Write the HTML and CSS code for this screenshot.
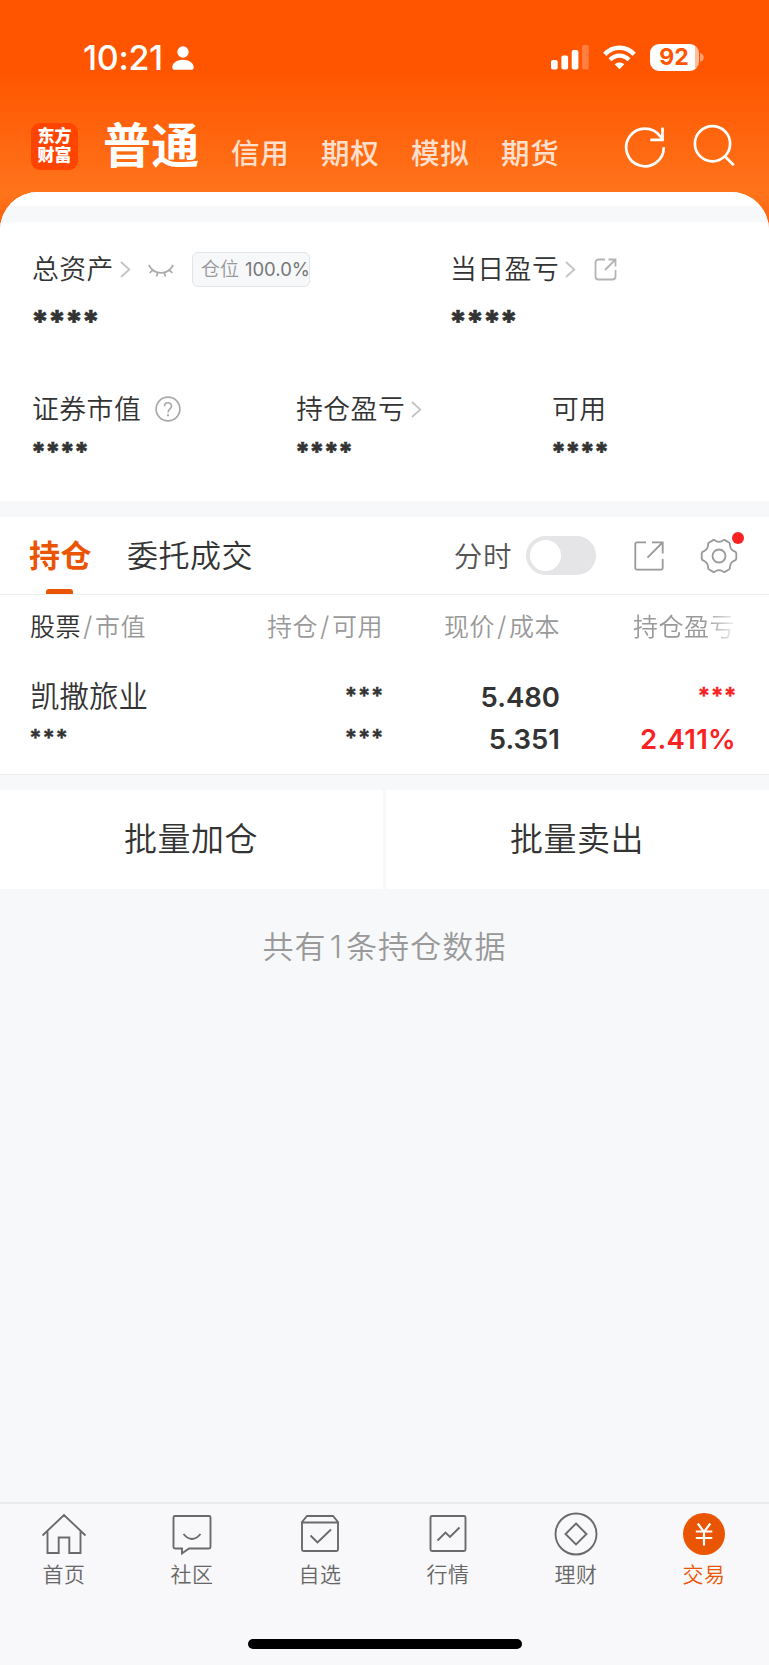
FILE: index.html
```html
<!DOCTYPE html>
<html lang="zh-CN">
<head>
<meta charset="utf-8">
<title>交易</title>
<link rel="stylesheet" href="styles.css">
</head>
<body>
<div class="app">
  <header class="hero">
    <div class="status">
      <span class="time">10:21</span>
      <svg class="person" width="22" height="24" viewBox="0 0 22 24" fill="#fff"><circle cx="11" cy="6" r="5.7"/><path d="M0.3 21.2C0.3 17 5 13.7 11 13.7s10.7 3.300 10.7 7.500c0 1.600-.9 2.600-2.500 2.600H2.800c-1.600 0-2.500-1-2.500-2.600Z"/></svg>
      <svg class="signal" width="38" height="25" viewBox="0 0 38 25" fill="#fff"><rect x="0" y="15" width="6.700" height="9.500" rx="2"/><rect x="10.400" y="10.500" width="6.700" height="14" rx="2"/><rect x="20.700" y="5" width="6.700" height="19.500" rx="2"/><rect x="31" y="0" width="6.700" height="24.500" rx="2" opacity=".25"/></svg>
      <svg class="wifi" width="33" height="25" viewBox="0 0 33 25" fill="none" stroke="#fff"><path d="M1.800 9.400C10 .6 23 .6 31.200 9.400" stroke-width="4.600"/><path d="M7 14.800C12.500 9.300 20.500 9.300 26 14.800" stroke-width="4.200"/><path d="M16.500 24.200 11.700 19.300C14.500 17 18.500 17 21.300 19.300Z" fill="#fff" stroke="none"/></svg>
      <span class="battery"><span class="level">92</span></span>
      <svg class="nub" width="4" height="9" viewBox="0 0 4 9"><path d="M0 0C5 1.500 5 7.500 0 9Z" fill="#fff" opacity=".45"/></svg>
    </div>
    <nav class="accounts">
      <div class="logo"><span>东方</span><span>财富</span></div>
      <b class="current">普通</b>
      <span class="acct">信用</span><span class="acct">期权</span><span class="acct">模拟</span><span class="acct">期货</span>
      <svg class="refresh" width="44" height="44" viewBox="0 0 44 44" fill="none" stroke="#fff" stroke-width="2.700"><path d="M40.800 22.300A18.800 18.800 0 1 1 37.300 11.500L39.500 14.300"/><path d="M39.500 2.500V14.800H27.300"/></svg>
      <svg class="search" width="44" height="44" viewBox="0 0 44 44" fill="none" stroke="#fff" stroke-width="2.700"><circle cx="20.500" cy="19.700" r="17.600"/><path d="M32.800 32.300 41.800 41.200"/></svg>
    </nav>
  </header>

  <main class="panel">
    <div class="band lead"></div>
    <section class="overview">
      <div class="totals">
        <div class="total">
          <div class="label">总资产<svg class="chev" width="11" height="17" viewBox="0 0 11 17"><path d="M1 1 9.300 8.500 1 16"/></svg><svg class="eye" width="26" height="14" viewBox="0 0 26 14" fill="none" stroke="#aaa" stroke-width="1.700"><path d="M.7 1C6.500 11.500 19.500 11.500 25.300 1M5 5.700 1.700 9M9.800 8.400 8.600 12.600M16.200 8.400 17.400 12.600M21 5.700 24.300 9"/></svg><span class="badge">仓位<i>100.0%</i></span></div>
          <div class="mask big">****</div>
        </div>
        <div class="total">
          <div class="label">当日盈亏<svg class="chev" width="11" height="17" viewBox="0 0 11 17"><path d="M1 1 9.300 8.500 1 16"/></svg><svg class="share" width="23" height="23" viewBox="0 0 23 23" fill="none" stroke="#b4b4b4" stroke-width="1.800"><path d="M11 1.500H4.500a3 3 0 0 0-3 3v14a3 3 0 0 0 3 3h14a3 3 0 0 0 3-3V12M14.500 1.500h7v7M21 2 11 12"/></svg></div>
          <div class="mask big">****</div>
        </div>
      </div>
      <div class="details">
        <div class="detail">
          <div class="label">证券市值<svg class="help" width="26" height="26" viewBox="0 0 26 26" fill="none" stroke="#aaa" stroke-width="1.700"><circle cx="13" cy="13" r="11.900"/><path d="M9.500 10.300C9.500 5.600 16.500 5.600 16.500 10.200 16.500 12.800 13 13 13 16.500"/><path d="M13 18.300V20.300" stroke-width="2"/></svg></div>
          <div class="mask">****</div>
        </div>
        <div class="detail">
          <div class="label">持仓盈亏<svg class="chev" width="11" height="17" viewBox="0 0 11 17"><path d="M1 1 9.300 8.500 1 16"/></svg></div>
          <div class="mask">****</div>
        </div>
        <div class="detail">
          <div class="label">可用</div>
          <div class="mask">****</div>
        </div>
      </div>
    </section>
    <div class="band"></div>
    <section class="toolbar">
      <b class="tab on">持仓</b>
      <span class="tab">委托成交</span>
      <span class="minute">分时</span>
      <span class="toggle"></span>
      <svg class="export" width="30" height="30" viewBox="0 0 30 30" fill="none" stroke="#999" stroke-width="1.800"><path d="M12 1.300H3a1.700 1.700 0 0 0-1.700 1.700V27a1.700 1.700 0 0 0 1.700 1.700H27a1.700 1.700 0 0 0 1.700-1.700V18M18 1.300H28.700V12.500M28.500 1.500 13.500 16.700"/></svg>
      <span class="settings"><svg width="38" height="36" viewBox="0 0 38 36" fill="none" stroke="#999" stroke-width="1.800" stroke-linejoin="round"><circle cx="19" cy="18" r="6.500"/><path d="M13.600 1.900Q15 2 15.800 3Q19 4.600 22.200 3Q23 2 24.400 1.900L29.300 4.700Q30.200 5.700 29.900 7Q30.200 11.300 34 13.200Q36 13.800 36.300 15.300V20.700Q36 22.200 34 22.800Q30.200 24.700 29.900 29Q30.200 30.300 29.300 31.300L24.400 34.100Q23 34 22.200 33Q19 31.400 15.800 33Q15 34 13.600 34.100L8.700 31.300Q7.800 30.300 8.100 29Q7.800 24.700 4 22.800Q2 22.200 1.700 20.700V15.300Q2 13.800 4 13.200Q7.800 11.300 8.100 7Q7.800 5.700 8.700 4.700Z"/></svg></span>
    </section>
    <section class="holdings">
      <div class="row head"><span><em>股票</em><s>/</s>市值</span><span>持仓<s>/</s>可用</span><span>现价<s>/</s>成本</span><span class="fade">持仓盈亏</span></div>
      <div class="row first"><span class="name">凯撒旅业</span><span class="stars">***</span><span class="num">5.480</span><span class="stars up">***</span></div>
      <div class="row second"><span class="stars">***</span><span class="stars">***</span><span class="num">5.351</span><span class="num up">2.411%</span></div>
    </section>
    <div class="band short"></div>
    <section class="bulk"><div>批量加仓</div><div>批量卖出</div></section>
    <p class="count">共有<i>1</i>条持仓数据</p>
  </main>

  <footer class="dock">
    <nav class="tabs">
      <a><svg width="46" height="44" viewBox="0 0 46 44"><path d="M1.500 23.500 23 3 44.500 23.500M6.500 19.500V41H17.700V25.500H28.300V41H39.500V19.500"/></svg>首页</a>
      <a><svg width="46" height="44" viewBox="0 0 46 44"><path d="M6 4H40a1.500 1.500 0 0 1 1.500 1.500V35a1.500 1.500 0 0 1-1.500 1.500H20L13 41.500V36.500H6a1.500 1.500 0 0 1-1.500-1.500V5.500A1.500 1.500 0 0 1 6 4ZM14.500 22Q23 32 31.500 22"/></svg>社区</a>
      <a><svg width="46" height="44" viewBox="0 0 46 44"><path d="M10 4H36L41 10V37.500a1.500 1.500 0 0 1-1.500 1.500H6.500A1.500 1.500 0 0 1 5 37.500V10ZM5 10.500H41M13.500 23.500 20.500 30.500 34 17.500"/></svg>自选</a>
      <a><svg width="46" height="44" viewBox="0 0 46 44"><rect x="5.500" y="4" width="35" height="35" rx="1.500"/><path d="M12.500 28.500 20.500 20.500 25 25 34.500 15.500"/></svg>行情</a>
      <a><svg width="46" height="44" viewBox="0 0 46 44"><circle cx="23" cy="22" r="20.500"/><path d="M23 11.500 33.500 22 23 32.500 12.500 22Z"/></svg>理财</a>
      <a class="active"><svg width="46" height="44" viewBox="0 0 46 44"><circle class="disc" cx="23" cy="22" r="21"/><path class="yen" d="M16.800 11.500 23 20 29.300 11.500M23 20V33.500M14.800 19.500H31.300M14.800 26H31.300"/></svg>交易</a>
    </nav>
    <div class="home"></div>
  </footer>
</div>
</body>
</html>
```

FILE: styles.css
```css
* { box-sizing: border-box; }
body { margin: 0; }
i, em, s { font-style: normal; text-decoration: none; }
svg { display: block; flex: none; }

.app {
  width: 769px;
  height: 1665px;
  display: flex;
  flex-direction: column;
  overflow: hidden;
  background: linear-gradient(#ff5500 70px, #ff741b 195px, #ff5a08 232px);
  font-family: Inter, "Noto Sans CJK SC", sans-serif;
  font-weight: 350;
  color: #333;
  white-space: nowrap;
}

/* Header */
.hero { height: 192px; flex: none; color: #fff; }
.status { height: 90px; padding: 25px 65px 0 83px; display: flex; align-items: center; }
.time { font-size: 34px; font-weight: 500; line-height: 40px; width: 82px; letter-spacing: -.3px; }
.person { margin: 0 auto 0 7px; }
.signal { margin-right: 14px; }
.wifi { margin-right: 14px; }
.battery { width: 49px; height: 27px; border-radius: 9px; overflow: hidden; background: linear-gradient(90deg, #fff 45px, #ffbf9c 45px); }
.level { display: block; width: 48px; color: #ff5500; font-size: 23px; font-weight: 700; line-height: 27px; text-align: center; }
.nub { margin-left: 1px; }
.accounts { height: 102px; padding: 0 31px; display: flex; align-items: flex-start; }
.logo { width: 47px; height: 47px; margin-top: 33px; border-radius: 9px; background: #ff4400; font-size: 17px; font-weight: 900; line-height: 19px; padding-top: 4px; text-align: center; }
.logo span { display: block; }
.current { width: 128px; padding-left: 25px; margin-top: 21px; font-size: 48px; line-height: 70px; font-weight: 700; letter-spacing: .3px; }
.acct { width: 90px; margin-top: 44px; padding-left: 25px; font-size: 28.500px; line-height: 40px; font-weight: 500; letter-spacing: .8px; color: #ffe0cf; }
.refresh { margin: 35px 0 0 57px; }
.search { margin: 34px 0 0 25px; }

/* Panel */
.panel { flex: 1; background: #f7f8fa; border-radius: 38px 38px 0 0; overflow: hidden; }
.band { height: 16px; background: #f7f8fa; }
.band.lead { height: 30px; border-top: 14px solid #fff; }
.band.short { height: 15px; }
.overview { height: 279px; background: #fff; padding: 27px 32px 0; }
.totals { display: flex; height: 140px; }
.total:first-child { width: 418px; }
.label { height: 40px; display: flex; align-items: center; font-size: 26.800px; letter-spacing: .5px; line-height: 40px; }
.chev { margin-left: 6px; fill: none; stroke: #c4c4c4; stroke-width: 1.800; }
.eye { margin: 3px 0 0 17px; }
.badge { width: 118px; height: 35px; margin-left: 18px; padding-left: 8px; border: 1px solid #e3e4e8; border-radius: 6px; background: #f7f8fa; font-size: 19px; line-height: 33px; letter-spacing: 0; color: #999; }
.badge i { margin-left: 6px; font-size: 18.500px; font-weight: 400; color: #777; }
.share { margin-left: 18px; }
.help { margin-left: 14px; }
.mask { height: 36px; line-height: 45px; font-size: 26px; font-weight: 800; letter-spacing: -.8px; text-indent: -1px; -webkit-text-stroke: .5px currentColor; }
.mask.big { height: 50px; line-height: 66px; font-size: 31px; letter-spacing: -1.100px; text-indent: -1px; }
.details { display: flex; }
.detail { width: 264px; flex: none; }
.detail:nth-child(2) { width: 256px; }

/* Toolbar */
.toolbar { height: 78px; background: #fff; border-bottom: 1px solid #eeeff1; padding: 0 31px 0 29px; display: flex; align-items: center; }
.tab { position: relative; font-size: 31px; letter-spacing: .5px; line-height: 77px; }
.tab.on { width: 98px; font-weight: 700; color: #ea5504; }
.tab.on::after { content: ""; position: absolute; left: 17px; bottom: 0; width: 27px; height: 5px; border-radius: 3px 3px 0 0; background: #ea5504; }
.minute { margin: 0 0 2px auto; font-size: 28.500px; letter-spacing: .6px; color: #555; }
.toggle { width: 70px; height: 39px; margin: 0 38px 0 14px; padding: 4px; border-radius: 20px; background: #e5e5e7; }
.toggle::after { content: ""; display: block; width: 31px; height: 31px; border-radius: 50%; background: #fff; }
.settings { position: relative; margin-left: 36px; }
.settings::after { content: ""; position: absolute; left: 32px; top: -6px; width: 12px; height: 12px; border-radius: 50%; background: #fa2222; }

/* Holdings */
.holdings { height: 180px; background: #fff; border-bottom: 1px solid #ececee; padding: 12px 33px 0 30px; }
.row { display: grid; grid-template-columns: 180px 173px 177px 176px; }
.row > * { text-align: right; }
.row > :first-child { text-align: left; }
.head { height: 41px; line-height: 40px; font-size: 25px; letter-spacing: .5px; color: #999; }
.head em { color: #333; }
.head s { margin: 0 2px; font-size: 27px; }
.head .fade { text-align: left; padding-left: 73px; -webkit-mask-image: linear-gradient(90deg, #000 145px, transparent 180px); mask-image: linear-gradient(90deg, #000 145px, transparent 180px); }
.first, .second { height: 42px; line-height: 42px; }
.first { margin-top: 28px; }
.name { font-size: 29.500px; letter-spacing: 0; margin-top: -1px; }
.num { font-size: 27.500px; font-weight: 600; }
.num.up { letter-spacing: .3px; }
.stars { font-size: 23px; font-weight: 700; letter-spacing: .3px; line-height: 40px; margin: 0 -1px 0 -1px; -webkit-text-stroke: .3px currentColor; }
.up { color: #fa2222; }

.bulk { display: grid; grid-template-columns: 1fr 1fr; gap: 3px; height: 98px; }
.bulk div { background: #fff; text-align: center; font-size: 33px; letter-spacing: .5px; line-height: 99px; padding-right: 1px; }
.count { margin: 39px 0 0; text-align: center; font-size: 31px; letter-spacing: 1.100px; line-height: 40px; color: #999; }
.count i { margin: 0 3px; }

/* Dock */
.dock { height: 163px; flex: none; background: #f8f8fa; border-top: 2px solid #e9eaed; }
.tabs { display: grid; grid-template-columns: repeat(6, 128px); padding-top: 8px; height: 135px; }
.tabs a { display: flex; flex-direction: column; align-items: center; font-size: 21px; letter-spacing: .5px; line-height: 34px; color: #666; }
.tabs svg { margin-bottom: 2px; fill: none; stroke: #6a6a6a; stroke-width: 1.900; }
.tabs .active { color: #ea5504; }
.tabs .disc { fill: #ea5504; stroke: none; }
.tabs .yen { stroke: #fff; stroke-width: 2.200; }
.home { width: 274px; height: 10px; margin: 0 auto; border-radius: 5px; background: #000; }
```
